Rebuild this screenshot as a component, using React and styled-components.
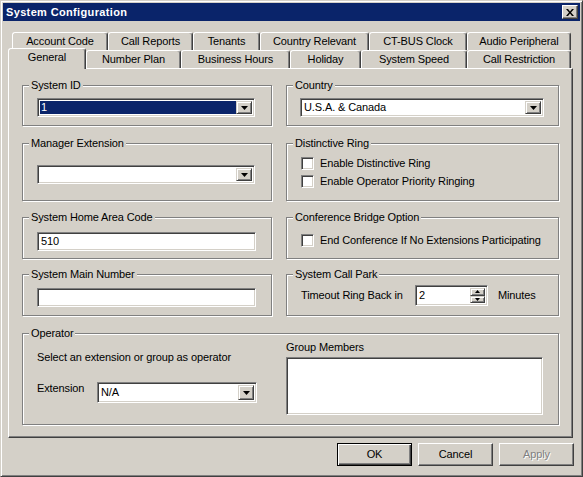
import React from 'react'
import styled, { createGlobalStyle, css } from 'styled-components'

const Global = createGlobalStyle`
  html, body { margin: 0; padding: 0; background: #d4d0c8; }
  * { box-sizing: border-box; }
`

const raised = css`
  border: 1px solid;
  border-color: #fff #404040 #404040 #fff;
  box-shadow: inset -1px -1px #808080;
  background: #d4d0c8;
`

const sunken = css`
  border: 1px solid;
  border-color: #808080 #fff #fff #808080;
  box-shadow: inset 1px 1px #404040, inset -1px -1px #d4d0c8;
  background: #fff;
`

const Window = styled.div`
  width: 583px;
  height: 477px;
  background: #d4d0c8;
  border: 1px solid;
  border-color: #d4d0c8 #404040 #404040 #d4d0c8;
  box-shadow: inset 1px 1px #fff, inset -1px -1px #808080;
  padding: 2px;
  display: flex;
  flex-direction: column;
  font-family: "Liberation Sans", Arial, sans-serif;
  font-size: 11px;
  line-height: 13px;
  letter-spacing: -0.12px;
  color: #000;
`

const TitleBar = styled.div`
  height: 18px;
  background: #0a246a;
  color: #fff;
  font-weight: bold;
  letter-spacing: 0.35px;
  display: flex;
  align-items: center;
  justify-content: space-between;
  padding: 0 2px 0 3px;
`

const CloseBtn = styled.div`
  ${raised}
  width: 16px;
  height: 14px;
  display: flex;
  align-items: center;
  justify-content: center;
`

const Body = styled.div`
  display: flex;
  flex-direction: column;
  padding: 11px 7px 0 5px;
`

const TabRow = styled.div`
  display: flex;
  height: 18px;
  padding-left: ${p => p.$indent || 0}px;
`

const Tab = styled.div`
  width: ${p => p.$w}px;
  height: ${p => (p.$active ? 21 : 18)}px;
  margin-top: ${p => (p.$active ? -2 : 0)}px;
  padding-bottom: ${p => (p.$active ? 3 : 0)}px;
  position: relative;
  z-index: ${p => (p.$active ? 2 : 0)};
  border: 1px solid;
  border-bottom: none;
  border-color: #fff #404040 transparent #fff;
  border-radius: 3px 3px 0 0;
  box-shadow: inset -1px 0 #808080;
  background: #d4d0c8;
  display: flex;
  align-items: center;
  justify-content: center;
  white-space: nowrap;
`

const Panel = styled.div`
  height: 370px;
  border: 1px solid;
  border-color: #fff #404040 #404040 #fff;
  box-shadow: inset -1px -1px #808080;
  padding: 16px 0 0 13px;
`

const GroupRow = styled.div`
  display: grid;
  grid-template-columns: 250px 273px;
  column-gap: 14px;
  margin-top: ${p => p.$mt || 0}px;
`

const Group = styled.div`
  position: relative;
  height: ${p => p.$h}px;
  border: 1px solid #808080;
  box-shadow: inset 1px 1px #fff, 1px 1px #fff;
  padding: ${p => p.$pad || '0'};
  grid-column: ${p => (p.$wide ? '1 / -1' : 'auto')};
`

const Caption = styled.span`
  position: absolute;
  top: -7px;
  left: 6px;
  padding: 0 2px;
  background: #d4d0c8;
  white-space: nowrap;
`

const Combo = styled.div`
  ${sunken}
  width: ${p => p.$w}px;
  height: ${p => p.$h || 19}px;
  padding: 2px;
  display: flex;
`

const ComboValue = styled.div`
  flex: 1;
  padding-left: 1px;
  display: flex;
  align-items: center;
  background: ${p => (p.$sel ? '#0a246a' : '#fff')};
  color: ${p => (p.$sel ? '#fff' : '#000')};
  white-space: nowrap;
`

const DropBtn = styled.div`
  ${raised}
  border-color: #d4d0c8 #404040 #404040 #d4d0c8;
  box-shadow: inset 1px 1px #fff, inset -1px -1px #808080;
  width: 16px;
  height: 100%;
  display: flex;
  align-items: center;
  justify-content: center;
`

const TextBox = styled.div`
  ${sunken}
  width: ${p => p.$w}px;
  height: 19px;
  padding: 0 3px;
  display: flex;
  align-items: center;
`

const CheckRow = styled.label`
  display: flex;
  align-items: center;
  height: 18px;
  gap: 6px;
`

const CheckBox = styled.span`
  ${sunken}
  width: 13px;
  height: 13px;
  flex: none;
`

const FieldRow = styled.div`
  display: flex;
  align-items: ${p => p.$align || 'center'};
  margin-top: ${p => p.$mt || 0}px;
`

const FieldLabel = styled.span`
  width: ${p => p.$w}px;
  flex: none;
  white-space: nowrap;
  margin-left: ${p => p.$ml || 0}px;
`

const Spin = styled.div`
  ${sunken}
  width: 73px;
  height: 21px;
  padding: 2px;
  display: flex;
`

const SpinValue = styled.div`
  flex: 1;
  padding-left: 1px;
  display: flex;
  align-items: center;
`

const SpinBtns = styled.div`
  width: 15px;
  display: flex;
  flex-direction: column;
`

const SpinBtn = styled.div`
  ${raised}
  border-color: #d4d0c8 #404040 #404040 #d4d0c8;
  box-shadow: inset 1px 1px #fff, inset -1px -1px #808080;
  flex: 1;
  display: flex;
  align-items: center;
  justify-content: center;
`

const OperatorGrid = styled.div`
  display: grid;
  grid-template-columns: 263px 257px;
  height: 100%;
`

const OperatorLeft = styled.div`
  padding: 17px 0 0 14px;
`

const OperatorRight = styled.div`
  padding-top: 7px;
  display: flex;
  flex-direction: column;
  gap: 3px;
`

const ListBox = styled.div`
  ${sunken}
  height: 58px;
`

const Footer = styled.div`
  display: flex;
  justify-content: flex-end;
  gap: 6px;
  margin-top: 5px;
  padding-right: 6px;
`

const Button = styled.div`
  ${raised}
  width: 75px;
  height: 23px;
  display: flex;
  align-items: center;
  justify-content: center;
  ${p => p.$default && css`
    border: 1px solid #000;
    box-shadow: inset 1px 1px #fff, inset -1px -1px #404040, inset -2px -2px #808080;
  `}
  ${p => p.$disabled && css`
    color: #808080;
    text-shadow: 1px 1px #fff;
  `}
`

const Arrow = ({ up }) => (
  <svg width="7" height="4" viewBox="0 0 7 4">
    <polygon points={up ? '3.5,0 7,4 0,4' : '0,0 7,0 3.5,4'} fill="#000" />
  </svg>
)

const SmallArrow = ({ up }) => (
  <svg width="5" height="3" viewBox="0 0 5 3">
    <polygon points={up ? '2.5,0 5,3 0,3' : '0,0 5,0 2.5,3'} fill="#000" />
  </svg>
)

const ComboBox = ({ w, h, value, sel }) => (
  <Combo $w={w} $h={h}>
    <ComboValue $sel={sel}>{value}</ComboValue>
    <DropBtn><Arrow /></DropBtn>
  </Combo>
)

const Check = ({ children }) => (
  <CheckRow>
    <CheckBox />
    <span>{children}</span>
  </CheckRow>
)

const backTabs = [
  ['Account Code', 96], ['Call Reports', 85], ['Tenants', 67],
  ['Country Relevant', 109], ['CT-BUS Clock', 98], ['Audio Peripheral', 104],
]
const frontTabs = [
  ['General', 78], ['Number Plan', 95], ['Business Hours', 109],
  ['Holiday', 71], ['System Speed', 106], ['Call Restriction', 104],
]

export default function App() {
  return (
    <>
      <Global />
      <Window>
        <TitleBar>
          <span>System Configuration</span>
          <CloseBtn>
            <svg width="8" height="7" viewBox="0 0 8 7">
              <path d="M0 0 L2 0 L4 2.5 L6 0 L8 0 L5 3.5 L8 7 L6 7 L4 4.5 L2 7 L0 7 L3 3.5 Z" fill="#000" />
            </svg>
          </CloseBtn>
        </TitleBar>
        <Body>
          <TabRow $indent={4}>
            {backTabs.map(([t, w]) => <Tab key={t} $w={w}>{t}</Tab>)}
          </TabRow>
          <TabRow>
            {frontTabs.map(([t, w], i) => <Tab key={t} $w={w} $active={i === 0}>{t}</Tab>)}
          </TabRow>
          <Panel>
            <GroupRow>
              <Group $h={41} $pad="12px 0 0 14px">
                <Caption>System ID</Caption>
                <ComboBox w={218} value="1" sel />
              </Group>
              <Group $h={41} $pad="12px 0 0 13px">
                <Caption>Country</Caption>
                <ComboBox w={244} value="U.S.A. & Canada" />
              </Group>
            </GroupRow>
            <GroupRow $mt={17}>
              <Group $h={58} $pad="21px 0 0 14px">
                <Caption>Manager Extension</Caption>
                <ComboBox w={218} value="" />
              </Group>
              <Group $h={58} $pad="10px 0 0 14px">
                <Caption>Distinctive Ring</Caption>
                <Check>Enable Distinctive Ring</Check>
                <Check>Enable Operator Priority Ringing</Check>
              </Group>
            </GroupRow>
            <GroupRow $mt={16}>
              <Group $h={42} $pad="14px 0 0 14px">
                <Caption>System Home Area Code</Caption>
                <TextBox $w={219}>510</TextBox>
              </Group>
              <Group $h={42} $pad="13px 0 0 14px">
                <Caption>Conference Bridge Option</Caption>
                <Check>End Conference If No Extensions Participating</Check>
              </Group>
            </GroupRow>
            <GroupRow $mt={15}>
              <Group $h={42} $pad="13px 0 0 14px">
                <Caption>System Main Number</Caption>
                <TextBox $w={219} />
              </Group>
              <Group $h={42} $pad="10px 0 0 14px">
                <Caption>System Call Park</Caption>
                <FieldRow>
                  <FieldLabel $w={114}>Timeout Ring Back in</FieldLabel>
                  <Spin>
                    <SpinValue>2</SpinValue>
                    <SpinBtns>
                      <SpinBtn><SmallArrow up /></SpinBtn>
                      <SpinBtn><SmallArrow /></SpinBtn>
                    </SpinBtns>
                  </Spin>
                  <FieldLabel $ml={10}>Minutes</FieldLabel>
                </FieldRow>
              </Group>
            </GroupRow>
            <GroupRow $mt={17}>
              <Group $h={92} $wide>
                <Caption>Operator</Caption>
                <OperatorGrid>
                  <OperatorLeft>
                    <div>Select an extension or group as operator</div>
                    <FieldRow $mt={18} $align="flex-start">
                      <FieldLabel $w={60}>Extension</FieldLabel>
                      <ComboBox w={160} h={21} value="N/A" />
                    </FieldRow>
                  </OperatorLeft>
                  <OperatorRight>
                    <div>Group Members</div>
                    <ListBox />
                  </OperatorRight>
                </OperatorGrid>
              </Group>
            </GroupRow>
          </Panel>
        </Body>
        <Footer>
          <Button $default>OK</Button>
          <Button>Cancel</Button>
          <Button $disabled>Apply</Button>
        </Footer>
      </Window>
    </>
  )
}
